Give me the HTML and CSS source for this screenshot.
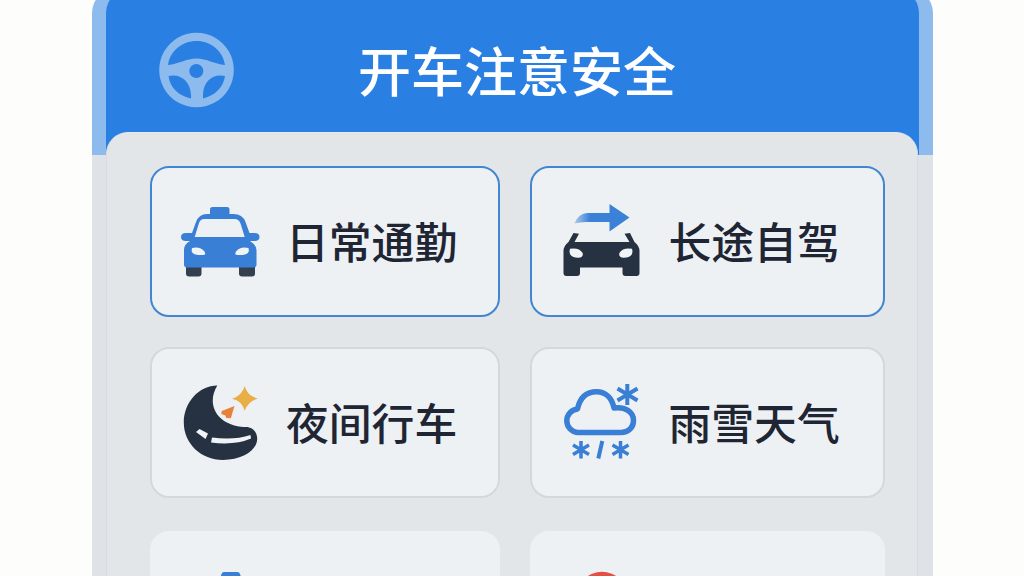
FILE: index.html
```html
<!DOCTYPE html>
<html lang="zh-CN">
<head>
<meta charset="utf-8">
<title>开车注意安全</title>
<link rel="stylesheet" href="styles.css">
</head>
<body>
<main class="device">
  <div class="screen">
    <header class="header">
      <svg class="wheel" viewBox="158 32 77 77">
        <path fill-rule="evenodd" d="M196.500 32.700a37.300 37.300 0 1 0 .01 0ZM168 65C170 51 182 41 196.500 41S223 51 225 65C214 64 207 58.500 196.500 58.500S179 64 168 65ZM168.500 76C181 73 192 82 191 98.500C179 96 170 88 168.500 76ZM225 76C212 73 202 82 203 98.500C214 96 223.500 88 225 76ZM196.300 64a7 7 0 1 1-.01 0Z"/>
      </svg>
      <h1 class="title">开车注意安全</h1>
    </header>
    <section class="panel">
      <article class="card card-active">
        <svg class="icon" viewBox="178 200 84 83">
          <path class="tire" d="M186 265h15.500v8.500q0 3-3 3h-9.500q-3 0-3-3ZM239 265h16v8.500q0 3-3 3h-10q-3 0-3-3Z"/>
          <path class="blue" fill-rule="evenodd" d="M212.500 207h14.500q2.500 0 2.500 2.500v4.500h4q9 0 12 8l4 11h5q5 0 5 4q0 4-5 4h-4.500q6.500 4 6.500 9v14.500q0 3-3 3h-66.500q-3 0-3-3v-15q0-5 6-8.500h-4q-5 0-5-4t5-4h6l4-11q3-8 11-8h3v-4.500q0-2.500 2.500-2.500ZM204 219q-3.500 0-5 4l-4.300 14h50l-4-13q-1.700-5-6-5Z"/>
          <path class="shine" d="M192 248q8-2 12.500 3.500q2 3.600-1.500 3.600h-5q-8-1-6-7.100ZM248.500 248q-8-2-12.500 3.500q-2 3.600 1.500 3.600h5q8-1 6-7.100Z"/>
        </svg>
        <span class="label">日常通勤</span>
      </article>
      <article class="card card-active card-right">
        <svg class="icon" viewBox="558 200 84 83">
          <defs><linearGradient id="trail"><stop offset="0" stop-color="#3b81d7" stop-opacity=".35"/><stop offset=".28" stop-color="#3b81d7"/></linearGradient></defs>
          <path fill="url(#trail)" d="M574.500 223.500q4-10.500 13-10.500h22v-9l20 13.500-20 14V222H586q-6 0-11.500 1.500Z"/>
          <path class="dark" d="M573.500 233l5.500.8-4.500 8.200h55l-5-8.200 5.500-.8 4.500 9q5 4 5 9v22q0 3-3 3h-11q-3 0-3-3v-5.500h-42.500v5.500q0 3-3 3h-10.500q-3 0-3-3v-22q0-5 5-9Z"/>
          <path class="shine" d="M570 248.700q9-1.500 12.500 4q1.500 5-4 5q-11 0-8.500-9ZM632 248.700q-9-1.500-12.500 4q-1.500 5 4 5q11 0 8.500-9Z"/>
        </svg>
        <span class="label">长途自驾</span>
      </article>
      <article class="card">
        <svg class="icon" viewBox="178 380.500 84 83">
          <path class="dark" d="M217.300 385C199 385 183.800 402 183.800 422C183.800 443 201 459.500 223 459.500C242 459.500 257 450 257.200 438.500C257.300 431 252 426.500 246 426.500C240 426.500 229 425 221 418C211 409 210.500 396 217.300 385Z"/>
          <path class="shine" d="M199.500 428.500l8.500 4.500-2.500 5.500-9.500-7ZM212 437q22 3 38.500-2.500l.5 3.500q-16 7-40 4Z"/>
          <path fill="#e9ae45" d="M244.700 385.500q2.600 10 13.300 12.700q-9.700 2.200-13.300 12q-2.600-9.800-12.700-12q10.100-3 12.700-12.700Z"/>
          <path fill="#e8823b" d="M234.500 405.500l-3.700 12.200-4.600-.2-.7-2.500-4.200-1.400.4-3Z"/>
        </svg>
        <span class="label">夜间行车</span>
      </article>
      <article class="card card-right">
        <svg class="icon" viewBox="558 380.500 84 83">
          <path class="cloud" d="M577.500 432A11.800 11.800 0 0 1 577.500 408.500C580 397 587 391.300 596.500 391.300C606 391.300 612 398 614 407.500C625 406 633.500 411 633.500 420C633.500 427.500 628 432 621 432Z"/>
          <path class="flake large" d="M627.300 383.500v21M617.500 388l20 12M617.500 400l20-12"/>
          <path class="flake" d="M581 440.500v17.500M573 444.500l16 9.500M573 454l16-9.500M620.500 440.500v17.500M612.500 444.500l16 9.500M612.500 454l16-9.500"/>
          <path class="rain" d="M602.300 440.500l-4 17.500"/>
        </svg>
        <span class="label">雨雪天气</span>
      </article>
      <article class="card card-plain">
        <svg class="peek" viewBox="178 569 84 7"><path class="blue" d="M220.500 576l1-3q.7-2 2.500-2h13.500q1.800 0 2.500 2l1 3Z"/></svg>
      </article>
      <article class="card card-plain">
        <svg class="peek" viewBox="558 569 84 7"><circle cx="602" cy="596" r="25.300" fill="#e34f43"/></svg>
      </article>
    </section>
  </div>
</main>
</body>
</html>
```
FILE: styles.css
```css
* { box-sizing: border-box; }
body {
  margin: 0;
  height: 576px;
  overflow: hidden;
  background: #fdfdfc;
  font-family: "Noto Sans CJK SC", sans-serif;
}
.device {
  width: 841px;
  height: 596px;
  margin: -11px 0 0 92px;
  padding: 0 14px;
  border-radius: 24px 24px 0 0;
  background: linear-gradient(#8ebbee 0 166.500px, #dfe3e7 166.500px);
  overflow: hidden;
}
.screen {
  height: 100%;
  border-radius: 24px 24px 0 0;
  background: linear-gradient(#2a7fe3 0 166px, #e0e4e8 166px);
  overflow: hidden;
}
.header {
  display: flex;
  align-items: center;
  height: 143px;
  padding: 11px 0 0 52px;
}
.wheel {
  flex: none;
  width: 77px;
  height: 77px;
  margin-top: 9px;
  fill: #8ebbee;
}
.title {
  margin: 5px 0 0 123px;
  color: #fff;
  font-size: 53px;
  font-weight: 500;
  line-height: 72px;
  white-space: nowrap;
}
.panel {
  display: grid;
  grid-template-columns: 350px 355px;
  grid-template-rows: 151px 151px 151px;
  column-gap: 30px;
  row-gap: 29.500px;
  align-content: start;
  width: 812px;
  height: 464px;
  padding: 33px 0 0 43px;
  border: 1px solid #d7dce0;
  border-top-color: #e8eaec;
  border-bottom: 0;
  border-radius: 22px 22px 0 0;
  background: #e3e6e9;
}
.card {
  display: flex;
  align-items: center;
  gap: 24px;
  padding-left: 26px;
  border: 2px solid #d3d8dc;
  border-radius: 19px;
  background: #eef1f4;
}
.card-active { border-color: #4086d1; }
.card-right { gap: 26.500px; }
.card-plain {
  align-items: flex-start;
  margin-top: 4px;
  border-color: #eef1f4;
}
.icon {
  flex: none;
  width: 84px;
  height: 83px;
}
.peek {
  flex: none;
  width: 84px;
  height: 7px;
  margin-top: 37px;
}
.label {
  margin-top: -3px;
  color: #202533;
  font-size: 42.800px;
  font-weight: 500;
  line-height: 60px;
  white-space: nowrap;
}
.blue { fill: #397fd5; }
.dark { fill: #263141; }
.tire { fill: #333f4e; }
.shine { fill: #f1f4f6; }
.cloud { fill: none; stroke: #397fd5; stroke-width: 5.500; stroke-linejoin: round; }
.flake { fill: none; stroke: #397fd5; stroke-width: 3.500; }
.large { stroke-width: 4; }
.rain { fill: none; stroke: #397fd5; stroke-width: 4; }
```
